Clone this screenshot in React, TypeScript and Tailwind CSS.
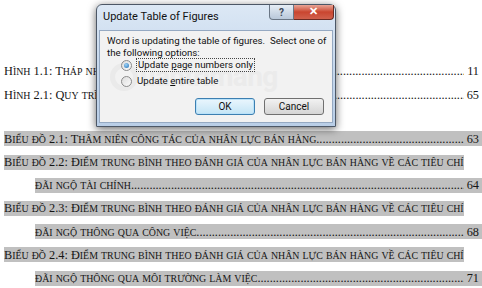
import React from 'react';

type Entry = {
  text: string;
  page?: string;
  hl?: boolean;
  indent?: boolean;
  gap?: boolean;
};

const entries: Entry[] = [
  { text: 'Hình 1.1: Tháp nhu cầu Maslow', page: '11' },
  { text: 'Hình 2.1: Quy trình bán hàng của doanh nghiệp', page: '65' },
  { text: 'Biểu đồ 2.1: Thâm niên công tác của nhân lực bán hàng', page: '63', hl: true, gap: true },
  { text: 'Biểu đồ 2.2: Điểm trung bình theo đánh giá của nhân lực bán hàng về các tiêu chí', hl: true },
  { text: 'đãi ngộ tài chính', page: '64', hl: true, indent: true },
  { text: 'Biểu đồ 2.3: Điểm trung bình theo đánh giá của nhân lực bán hàng về các tiêu chí', hl: true },
  { text: 'đãi ngộ thông qua công việc', page: '68', hl: true, indent: true },
  { text: 'Biểu đồ 2.4: Điểm trung bình theo đánh giá của nhân lực bán hàng về các tiêu chí', hl: true },
  { text: 'đãi ngộ thông qua môi trường làm việc', page: '71', hl: true, indent: true },
];

const DOTS = '.'.repeat(200);

// Word-style small caps: lowercase runs drawn as smaller capitals
function SmallCaps({ text }: { text: string }) {
  const runs: { small: boolean; s: string }[] = [];
  for (const ch of text) {
    const small = ch !== ch.toUpperCase();
    const last = runs[runs.length - 1];
    if (last && last.small === small) last.s += ch;
    else runs.push({ small, s: ch });
  }
  return (
    <span className="whitespace-nowrap">
      {runs.map((r, i) =>
        r.small ? (
          <span key={i} className="text-[9.9px]">
            {r.s.toUpperCase()}
          </span>
        ) : (
          <span key={i}>{r.s}</span>
        )
      )}
    </span>
  );
}

function TocLine({ e }: { e: Entry }) {
  return (
    <div className={`flex h-[23.2px] items-center ${e.gap ? 'mt-[21px]' : ''} ${e.indent ? 'pl-[35px]' : 'pl-[4px]'}`}>
      {e.page ? (
        <div className={`flex h-[15px] w-full items-center pr-[3px] ${e.hl ? 'bg-[#c0c0c0]' : ''}`}>
          <SmallCaps text={e.text} />
          <span className="min-w-0 flex-1 overflow-hidden whitespace-nowrap">{DOTS}</span>
          <span className="pl-[3px]">{e.page}</span>
        </div>
      ) : (
        <div className={`flex h-[15px] items-center ${e.hl ? 'bg-[#c0c0c0]' : ''}`}>
          <SmallCaps text={e.text} />
        </div>
      )}
    </div>
  );
}

function Radio({ checked }: { checked?: boolean }) {
  return (
    <span className="flex h-[11px] w-[11px] shrink-0 items-center justify-center rounded-full border border-[#8b8b8b] bg-gradient-to-br from-[#dcdcdc] to-[#fbfbfb]">
      {checked && (
        <span className="h-[5px] w-[5px] rounded-full bg-[radial-gradient(circle_at_40%_35%,#9fd3f7,#1f6fb5)]" />
      )}
    </span>
  );
}

function Dialog() {
  return (
    <div className="absolute left-[96px] top-[4px] h-[123px] w-[240px] rounded-t-[6px] border border-[#4c5766] bg-gradient-to-b from-[#dce8f5] via-[#c6d8ed] to-[#b9cee7] shadow-[0_2px_9px_rgba(0,0,0,0.6)]">
      <div className="flex h-[25px] items-center pl-[6px] text-[11px] text-[#111]">
        Update Table of Figures
      </div>
      {/* caption buttons */}
      <div className="absolute left-[172px] top-[0px] flex h-[15px]">
        <div className="flex w-[25px] items-center justify-center rounded-bl-[4px] border border-t-0 border-[#6a7685] bg-gradient-to-b from-[#e6edf5] to-[#b9c8da] text-[10px] font-bold text-[#3b4656]">
          ?
        </div>
        <div className="flex w-[40px] items-center justify-center rounded-br-[4px] border border-l-0 border-t-0 border-[#6b2a22] bg-gradient-to-b from-[#e8a496] via-[#c9452f] to-[#d0604c] text-[11px] font-bold text-white">
          ✕
        </div>
      </div>
      <div className="relative mx-[2px] h-[93px] overflow-hidden border border-[#95a9c2] bg-[#f2f2f2] px-[7px] pt-[4px] text-[9.7px] text-[#111]">
        <div className="pointer-events-none absolute left-[10px] top-[32px] flex items-center gap-[2px] text-[#ebebeb]">
          <span className="h-[28px] w-[28px] rounded-full border-[5px] border-[#eaeaea]" />
          <span className="text-[28px] font-bold leading-none tracking-tight">uantrimang</span>
        </div>
        <div className="relative whitespace-nowrap leading-[12px]">
          <div>Word is updating the table of figures.&nbsp; Select one of</div>
          <div>the following options:</div>
        </div>
        <div className="relative mt-[-2px] pl-[14px]">
          <div className="flex h-[16px] items-center gap-[4px]">
            <Radio checked />
            <span className="whitespace-nowrap border border-dotted border-[#444] px-[1px] leading-[12px]">
              Update <u>p</u>age numbers only
            </span>
          </div>
          <div className="flex h-[16px] items-center gap-[5px]">
            <Radio />
            <span className="whitespace-nowrap">
              Update <u>e</u>ntire table
            </span>
          </div>
        </div>
        <div className="relative mt-[9px] flex justify-end gap-[9px] pr-[1px] text-[10px]">
          <div className="flex h-[17px] w-[60px] items-center justify-center rounded-[3px] border border-[#3c7fb1] bg-gradient-to-b from-[#eaf6fd] to-[#c4e5f6] shadow-[inset_0_0_0_1px_#b9e2fa]">
            OK
          </div>
          <div className="flex h-[17px] w-[60px] items-center justify-center rounded-[3px] border border-[#707070] bg-gradient-to-b from-[#f2f2f2] to-[#d5d5d5]">
            Cancel
          </div>
        </div>
      </div>
    </div>
  );
}

export default function App() {
  return (
    <div className="relative h-[288px] w-[482px] overflow-hidden bg-white">
      <div className="pt-[60px] font-['Liberation_Serif',serif] text-[12.3px] text-[#151515]">
        {entries.map((e, i) => (
          <TocLine key={i} e={e} />
        ))}
      </div>
      <div className="font-['Roboto','Noto_Sans',sans-serif]">
        <Dialog />
      </div>
    </div>
  );
}
